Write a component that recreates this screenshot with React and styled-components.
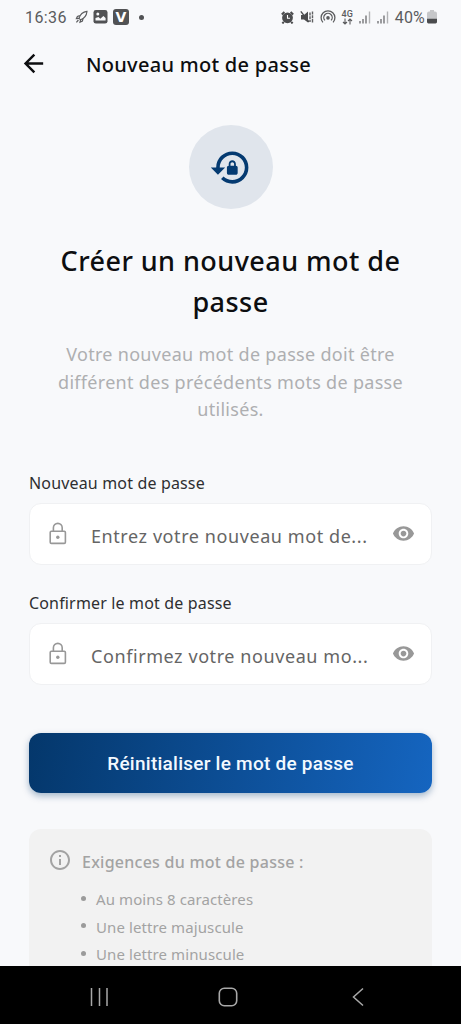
import styled, { createGlobalStyle } from "styled-components";
import {
  MdArrowBack,
  MdInfoOutline,
  MdLockReset,
  MdVisibility,
} from "react-icons/md";

const GlobalStyle = createGlobalStyle`
  * {
    box-sizing: border-box;
  }

  body {
    margin: 0;
    background-color: #f8f9fb;
    font-family: "Noto Sans", "Open Sans", sans-serif;
  }
`;

const Wrapper = styled.div`
  width: 100%;
  height: 100vh;
  display: flex;
  flex-direction: column;
  overflow: hidden;
  background-color: #f8f9fb;
`;

const StatusBar = styled.div`
  height: 34px;
  flex-shrink: 0;
  display: flex;
  justify-content: space-between;
  align-items: center;
  padding: 0 24px 0 25px;
  color: #5b5c5e;
  font-family: Roboto, sans-serif;
`;

const StatusGroup = styled.div`
  display: flex;
  align-items: center;
  gap: ${(props) => props.$gap};
`;

const Clock = styled.span`
  font-size: 16px;
  letter-spacing: 0.4px;
  margin-right: 3px;
`;

const AppBadge = styled.span`
  width: 16px;
  height: 16px;
  display: flex;
  justify-content: center;
  align-items: center;
  border-radius: 3px;
  background-color: #515254;
  color: #ffffff;
  font-family: "DejaVu Sans", sans-serif;
  font-size: 14px;
  font-weight: 700;
`;

const Dot = styled.span`
  width: 5px;
  height: 5px;
  border-radius: 50%;
  background-color: #515254;
  margin-left: 5px;
`;

const Network = styled.span`
  width: 11px;
  display: flex;
  flex-direction: column;
  align-items: center;
  font-size: 9px;
  line-height: 8px;
  font-weight: 500;
`;

const Percent = styled.span`
  font-size: 16px;
  letter-spacing: 0.2px;
`;

const Header = styled.header`
  height: 60px;
  flex-shrink: 0;
  display: flex;
  align-items: center;
  padding: 0 0 2px 19px;
  gap: 38px;
  color: #0d0e10;
`;

const HeaderTitle = styled.h1`
  margin: 2px 0 0;
  font-size: 20px;
  font-weight: 500;
  letter-spacing: 0.28px;
`;

const Content = styled.main`
  flex: 1;
  min-height: 0;
  overflow: hidden;
  display: flex;
  flex-direction: column;
  padding: 31px 29px 0;
`;

const IconCircle = styled.div`
  width: 84px;
  height: 84px;
  flex-shrink: 0;
  display: flex;
  justify-content: center;
  align-items: center;
  align-self: center;
  border-radius: 50%;
  background-color: #e0e5ec;
  color: #043a71;
`;

const Title = styled.h2`
  margin: 31px 0 0;
  font-size: 27px;
  line-height: 41px;
  font-weight: 500;
  letter-spacing: 0.45px;
  text-align: center;
  color: #0d0e10;
`;

const Description = styled.p`
  margin: 19px 0 0;
  font-size: 18px;
  line-height: 27.5px;
  text-align: center;
  letter-spacing: 0.3px;
  color: #aeafb1;
`;

const Field = styled.div`
  display: flex;
  flex-direction: column;
  margin-top: ${(props) => props.$top};
`;

const Label = styled.label`
  height: 21px;
  margin-bottom: 9px;
  font-size: 16px;
  line-height: 20px;
  letter-spacing: 0.16px;
  color: #2e2f31;
`;

const InputBox = styled.div`
  height: 62px;
  display: flex;
  align-items: center;
  padding: 0 16px 0 19px;
  border: 1px solid #f0f1f3;
  border-radius: 12px;
  background-color: #ffffff;
  color: #989898;
`;

const Placeholder = styled.span`
  flex: 1;
  margin: 4px 12px 0 24px;
  font-size: 18px;
  line-height: 28px;
  letter-spacing: 0.58px;
  white-space: nowrap;
  color: #656565;
`;

const SubmitButton = styled.button`
  height: 60px;
  flex-shrink: 0;
  margin: 48px 0 0;
  padding: 2px 6px 0;
  border: none;
  border-radius: 12px;
  background: linear-gradient(100deg, #04376b 0%, #1565c0 100%);
  box-shadow: 0 3px 7px rgba(4, 58, 113, 0.35);
  color: #f3f9ff;
  font-family: Roboto, sans-serif;
  font-size: 19px;
  font-weight: 500;
  letter-spacing: 0.25px;
`;

const Requirements = styled.section`
  height: 200px;
  flex-shrink: 0;
  margin-top: 36px;
  padding: 20px 19px;
  border-radius: 12px;
  background-color: #f2f2f2;
  color: #a3a3a3;
`;

const RequirementsTitle = styled.div`
  display: flex;
  align-items: center;
  gap: 10px;
  height: 26px;
  font-size: 16px;
  font-weight: 500;
  letter-spacing: 0.25px;

  svg {
    margin-top: -3px;
  }
`;

const List = styled.ul`
  margin: 11px 0 0;
  padding: 0 0 0 33px;
  list-style: none;
`;

const Item = styled.li`
  display: flex;
  align-items: center;
  gap: 10px;
  height: 27.5px;
  font-size: 15px;
  letter-spacing: 0.1px;

  &::before {
    content: "";
    width: 5px;
    height: 5px;
    margin-top: -2px;
    border-radius: 50%;
    background-color: #9b9b9b;
  }
`;

const NavBar = styled.nav`
  height: 58px;
  flex-shrink: 0;
  display: flex;
  align-items: center;
  justify-content: space-between;
  padding: 4px 96px 0 90px;
  background-color: #000000;
  color: #a8a8a8;
`;

const RocketIcon = () => (
  <svg width="13" height="14" viewBox="0 0 13 14" fill="none">
    <path
      d="M4 8.4C5 4.8 8 2 12 1.4C11.6 5.4 9.3 8.4 5.6 9.8Z"
      stroke="currentColor"
      strokeWidth="1.1"
    />
    <path
      d="M4.8 5.6L2.4 6.4L1.4 8.6L4 8.4M8 8.6L7.4 11L5 12.2L5.6 9.8M3.4 10L1.4 12.4"
      stroke="currentColor"
      strokeWidth="1.2"
    />
  </svg>
);

const ImageIcon = () => (
  <svg width="15" height="14" viewBox="0 0 15 14">
    <rect x=".5" width="14" height="13.6" rx="2.4" fill="#515254" />
    <circle cx="4.8" cy="4" r="1.5" fill="#f8f9fb" />
    <path d="M2.5 10.5V8L5.5 7L7.3 8.7L10.4 6L12.6 8V10.5Z" fill="#f8f9fb" />
  </svg>
);

const AlarmIcon = () => (
  <svg width="13" height="13" viewBox="0 0 13 13" fill="none">
    <circle cx="6.5" cy="6.8" r="5.4" fill="#4b4c4e" />
    <path
      d="M.8 3.4L3.4 1M12.2 3.4L9.6 1M2.8 10.8L1.4 12.5M10.2 10.8L11.6 12.5"
      stroke="#4b4c4e"
      strokeWidth="2"
    />
    <path d="M6.5 4V7.2H9" stroke="#ffffff" strokeWidth="1.1" />
  </svg>
);

const MuteIcon = () => (
  <svg width="14" height="14" viewBox="0 0 14 14" fill="none">
    <path d="M1 5H4L8 1.5V12.5L4 9.4H1Z" fill="#4b4c4e" />
    <path d="M.8 1.4L9 12" stroke="#4b4c4e" strokeWidth="1.4" />
    <path
      d="M10 2.5V12M12.5 1.5V13"
      stroke="#5f6062"
      strokeWidth="1.4"
      strokeDasharray="3 .7"
    />
  </svg>
);

const HotspotIcon = () => (
  <svg width="16" height="14" viewBox="0 0 16 14" fill="none">
    <path
      d="M2.9 12.4A6.9 6.9 0 1 1 13.1 12.4M4.9 10.4A4.2 4.2 0 1 1 11.1 10.4"
      stroke="currentColor"
      strokeWidth="1.3"
    />
    <circle cx="8" cy="7.9" r="1.8" fill="currentColor" />
  </svg>
);

const ArrowsIcon = () => (
  <svg width="11" height="7" viewBox="0 0 11 7" fill="none">
    <path
      d="M3 .5V6M1 4L3 6L5 4M8 6.5V1M6 3L8 1L10 3"
      stroke="currentColor"
      strokeWidth="1.1"
    />
  </svg>
);

const SignalIcon = () => (
  <svg width="12" height="13" viewBox="0 0 12 13" fill="none">
    <path
      d="M1 10V12.5M4 8V12.5M7 4.5V12.5"
      stroke="#747577"
      strokeWidth="1.4"
    />
    <path d="M10.5 .5V12.5" stroke="#b2b3b5" strokeWidth="1.4" />
  </svg>
);

const BatteryIcon = () => (
  <svg width="10" height="14" viewBox="0 0 10 14">
    <path d="M3 0H7V1.5H8Q10 1.5 10 3.5V9H0V3.5Q0 1.5 2 1.5H3Z" fill="#c6c7c9" />
    <path d="M0 8.8H10V12Q10 13.4 8.6 13.4H1.4Q0 13.4 0 12Z" fill="#4b4c4e" />
  </svg>
);

const LockIcon = () => (
  <svg width="18" height="24" viewBox="0 0 18 24" fill="none">
    <rect
      x="1.2"
      y="9.2"
      width="15.2"
      height="12.2"
      rx="1.2"
      stroke="currentColor"
      strokeWidth="1.6"
    />
    <path
      d="M4.4 9.2V5.8A4.4 4.4 0 0 1 13.2 5.8V9.2"
      stroke="currentColor"
      strokeWidth="1.6"
    />
    <circle cx="8.8" cy="15.2" r="1.7" fill="currentColor" />
  </svg>
);

const RecentsIcon = () => (
  <svg width="20" height="20" viewBox="0 0 20 20">
    <path d="M1.5 1V19M9.5 1V19M17 1V19" stroke="currentColor" strokeWidth="1.5" />
  </svg>
);

const HomeIcon = () => (
  <svg width="20" height="20" viewBox="0 0 20 20" fill="none">
    <rect
      x="1.3"
      y="1.3"
      width="17.4"
      height="17.4"
      rx="5"
      stroke="currentColor"
      strokeWidth="1.6"
    />
  </svg>
);

const BackIcon = () => (
  <svg width="20" height="20" viewBox="0 0 20 20" fill="none">
    <path d="M18 1.5L8.5 10L18 18.5" stroke="currentColor" strokeWidth="1.5" />
  </svg>
);

const PasswordField = ({ label, placeholder, top }) => (
  <Field $top={top}>
    <Label>{label}</Label>
    <InputBox>
      <LockIcon />
      <Placeholder>{placeholder}</Placeholder>
      <MdVisibility size={23} />
    </InputBox>
  </Field>
);

const rules = [
  "Au moins 8 caractères",
  "Une lettre majuscule",
  "Une lettre minuscule",
];

const App = () => {
  return (
    <Wrapper>
      <GlobalStyle />
      <StatusBar>
        <StatusGroup $gap="5px">
          <Clock>16:36</Clock>
          <RocketIcon />
          <ImageIcon />
          <AppBadge>V</AppBadge>
          <Dot />
        </StatusGroup>
        <StatusGroup $gap="6px">
          <AlarmIcon />
          <MuteIcon />
          <HotspotIcon />
          <Network>
            4G
            <ArrowsIcon />
          </Network>
          <SignalIcon />
          <SignalIcon />
          <StatusGroup $gap="2px">
            <Percent>40%</Percent>
            <BatteryIcon />
          </StatusGroup>
        </StatusGroup>
      </StatusBar>
      <Header>
        <MdArrowBack size={29} />
        <HeaderTitle>Nouveau mot de passe</HeaderTitle>
      </Header>
      <Content>
        <IconCircle>
          <MdLockReset size={43} />
        </IconCircle>
        <Title>
          Créer un nouveau mot de
          <br />
          passe
        </Title>
        <Description>
          Votre nouveau mot de passe doit être
          <br />
          différent des précédents mots de passe
          <br />
          utilisés.
        </Description>
        <PasswordField
          label="Nouveau mot de passe"
          placeholder="Entrez votre nouveau mot de..."
          top="49px"
        />
        <PasswordField
          label="Confirmer le mot de passe"
          placeholder="Confirmez votre nouveau mo..."
          top="28px"
        />
        <SubmitButton>Réinitialiser le mot de passe</SubmitButton>
        <Requirements>
          <RequirementsTitle>
            <MdInfoOutline size={24} />
            Exigences du mot de passe :
          </RequirementsTitle>
          <List>
            {rules.map((rule) => (
              <Item key={rule}>{rule}</Item>
            ))}
          </List>
        </Requirements>
      </Content>
      <NavBar>
        <RecentsIcon />
        <HomeIcon />
        <BackIcon />
      </NavBar>
    </Wrapper>
  );
};

export default App;
